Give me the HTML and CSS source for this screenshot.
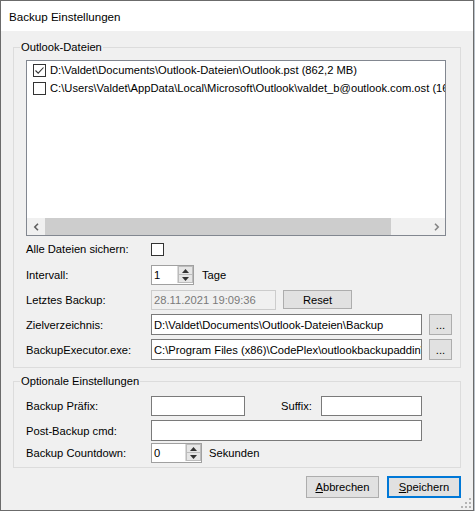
FILE: index.html
```html
<!DOCTYPE html>
<html lang="de">
<head>
<meta charset="utf-8">
<title>Backup Einstellungen</title>
<link rel="stylesheet" href="styles.css">
</head>
<body>
<div class="window">
  <div class="titlebar"><span class="title">Backup Einstellungen</span></div>
  <div class="client">
    <div class="group g1">
      <span class="legend">Outlook-Dateien</span>
      <div class="listbox">
        <div class="items">
          <div class="item"><span class="cb"><svg width="11" height="11" viewBox="0 0 11 11"><polyline points="1.5,5.5 4.2,8.2 9.5,2.5" fill="none" stroke="#333" stroke-width="1.1"/></svg></span><span>D:\Valdet\Documents\Outlook-Dateien\Outlook.pst (862,2 MB)</span></div>
          <div class="item"><span class="cb"></span><span>C:\Users\Valdet\AppData\Local\Microsoft\Outlook\valdet_b@outlook.com.ost (16</span></div>
        </div>
        <div class="hscroll">
          <span class="sb-btn"><svg width="7" height="8" viewBox="0 0 7 8"><polyline points="5,0.8 1.8,4 5,7.2" fill="none" stroke="#606060" stroke-width="1.6"/></svg></span>
          <span class="thumb"></span>
          <span class="track"></span>
          <span class="sb-btn"><svg width="7" height="8" viewBox="0 0 7 8"><polyline points="2,0.8 5.2,4 2,7.2" fill="none" stroke="#858585" stroke-width="1.6"/></svg></span>
        </div>
      </div>
      <div class="row r1"><span class="lbl">Alle Dateien sichern:</span><span class="cb"></span></div>
      <div class="row r2"><span class="lbl">Intervall:</span>
        <span class="num w43"><span class="num-val">1</span><span class="spin"><span class="spin-btn"><svg width="7" height="4" viewBox="0 0 7 4"><polygon points="0,4 7,4 3.5,0" fill="#333"/></svg></span><span class="spin-btn"><svg width="7" height="4" viewBox="0 0 7 4"><polygon points="0,0 7,0 3.5,4" fill="#333"/></svg></span></span></span>
        <span class="unit">Tage</span>
      </div>
      <div class="row r3"><span class="lbl">Letztes Backup:</span><span class="tb disabled w125">28.11.2021 19:09:36</span><span class="btn reset">Reset</span></div>
      <div class="row r4"><span class="lbl">Zielverzeichnis:</span><span class="tb w271">D:\Valdet\Documents\Outlook-Dateien\Backup</span><span class="btn dots">...</span></div>
      <div class="row r5"><span class="lbl">BackupExecutor.exe:</span><span class="tb w271">C:\Program Files (x86)\CodePlex\outlookbackupaddin\BackupExecutor.exe</span><span class="btn dots">...</span></div>
    </div>
    <div class="group g2">
      <span class="legend">Optionale Einstellungen</span>
      <div class="row s1"><span class="lbl">Backup Präfix:</span><span class="tb w94"></span><span class="lbl-suffix">Suffix:</span><span class="tb w101"></span></div>
      <div class="row s2"><span class="lbl">Post-Backup cmd:</span><span class="tb w271"></span></div>
      <div class="row s3"><span class="lbl">Backup Countdown:</span>
        <span class="num w51"><span class="num-val">0</span><span class="spin"><span class="spin-btn"><svg width="7" height="4" viewBox="0 0 7 4"><polygon points="0,4 7,4 3.5,0" fill="#333"/></svg></span><span class="spin-btn"><svg width="7" height="4" viewBox="0 0 7 4"><polygon points="0,0 7,0 3.5,4" fill="#333"/></svg></span></span></span>
        <span class="unit">Sekunden</span>
      </div>
    </div>
    <div class="buttons">
      <span class="btn dlg"><u>A</u>bbrechen</span>
      <span class="btn dlg default"><u>S</u>peichern</span>
    </div>
  </div>
  <svg class="grip" width="11" height="11" viewBox="0 0 11 11">
    <rect x="8" y="0" width="2" height="2" fill="#b4b4b4"/>
    <rect x="4" y="4" width="2" height="2" fill="#b4b4b4"/>
    <rect x="8" y="4" width="2" height="2" fill="#b4b4b4"/>
    <rect x="0" y="8" width="2" height="2" fill="#b4b4b4"/>
    <rect x="4" y="8" width="2" height="2" fill="#b4b4b4"/>
    <rect x="8" y="8" width="2" height="2" fill="#b4b4b4"/>
  </svg>
</div>
</body>
</html>
```
FILE: styles.css
```css
html, body {
  margin: 0;
  padding: 0;
}
body {
  background: #b9c1c9;
  font-family: "Liberation Sans", Arial, sans-serif;
  font-size: 11.2px;
  color: #000;
}
.window {
  position: relative;
  width: 474px;
  height: 511px;
  box-sizing: border-box;
  border: 1px solid #6b6b6b;
  background: #f0f0f0;
  display: flex;
  flex-direction: column;
}
.titlebar {
  height: 30px;
  flex: none;
  background: #fff;
  display: flex;
  align-items: center;
  padding-left: 8px;
  font-size: 11.6px;
}
.client {
  flex: 1;
  padding: 0 12px;
}
.group {
  position: relative;
  border: 1px solid #dcdcdc;
}
.g1 {
  margin-top: 16px;
  padding: 12px 14px 7px 12px;
}
.g2 {
  margin-top: 13px;
  padding: 0 14px 4px 12px;
}
.legend {
  position: absolute;
  top: -8px;
  left: 6px;
  padding: 0 1px;
  line-height: 14px;
  background: #f0f0f0;
}
.listbox {
  height: 176px;
  box-sizing: border-box;
  border: 1px solid #828790;
  background: #fff;
  display: flex;
  flex-direction: column;
  overflow: hidden;
}
.items {
  flex: 1;
  overflow: hidden;
  white-space: nowrap;
}
.item {
  height: 18px;
  display: flex;
  align-items: center;
  padding-left: 6px;
}
.cb {
  flex: none;
  width: 13px;
  height: 13px;
  box-sizing: border-box;
  border: 1px solid #333;
  background: #fff;
  margin-right: 4px;
  display: flex;
  align-items: center;
  justify-content: center;
}
.hscroll {
  height: 17px;
  flex: none;
  display: flex;
  background: #f0f0f0;
}
.sb-btn {
  flex: none;
  width: 17px;
  display: flex;
  align-items: center;
  justify-content: center;
}
.sb-btn:first-child {
  width: 18px;
}
.thumb {
  flex: none;
  width: 346px;
  background: #cdcdcd;
}
.track {
  flex: 1;
}
.row {
  display: flex;
  align-items: center;
}
.lbl {
  flex: none;
  width: 125px;
  white-space: nowrap;
}
.r1 { margin-top: 3px; height: 20px; }
.r2 { margin-top: 6px; height: 20px; }
.r3 { margin-top: 5px; height: 20px; align-items: flex-start; }
.r3 .lbl { align-self: center; }
.r4 { margin-top: 4px; height: 21px; }
.r5 { margin-top: 4px; height: 21px; }
.s1 { margin-top: 14px; height: 20px; }
.s2 { margin-top: 4px; height: 21px; }
.s3 { margin-top: 2px; height: 20px; }
.tb {
  flex: none;
  height: 100%;
  box-sizing: border-box;
  border: 1px solid #7a7a7a;
  background: #fff;
  padding-left: 2px;
  display: flex;
  align-items: center;
  white-space: nowrap;
  overflow: hidden;
}
.tb.disabled {
  border-color: #cccccc;
  background: #f0f0f0;
  color: #7a7a7a;
}
.w94 { width: 94px; }
.w101 { width: 101px; }
.w125 { width: 125px; }
.w271 { width: 271px; }
.lbl-suffix {
  flex: none;
  width: 40px;
  margin-left: 36px;
}
.btn {
  flex: none;
  box-sizing: border-box;
  border: 1px solid #adadad;
  background: #e1e1e1;
  display: flex;
  align-items: center;
  justify-content: center;
  white-space: nowrap;
}
.reset {
  width: 69px;
  height: 19px;
  margin-left: 7px;
}
.dots {
  width: 23px;
  height: 21px;
  margin-left: 7px;
}
.num {
  flex: none;
  height: 100%;
  box-sizing: border-box;
  border: 1px solid #a0a0a0;
  background: #fff;
  display: flex;
}
.w43 { width: 43px; }
.w51 { width: 51px; }
.num-val {
  flex: 1;
  padding-left: 2px;
  display: flex;
  align-items: center;
}
.spin {
  flex: none;
  width: 15px;
  margin: 0 0 1px 0;
  display: flex;
  flex-direction: column;
  border-left: 1px solid #dadada;
}
.spin-btn {
  flex: 1;
  background: #e6e6e6;
  border: 1px solid #bcbcbc;
  display: flex;
  align-items: center;
  justify-content: center;
}
.spin-btn + .spin-btn {
  border-top: none;
}
.unit {
  margin-left: 8px;
  white-space: nowrap;
}
.s3 .unit {
  margin-left: 7px;
}
.buttons {
  margin-top: 8px;
  display: flex;
  justify-content: flex-end;
  gap: 8px;
}
.dlg {
  height: 22px;
}
.dlg:first-child {
  width: 73px;
}
.dlg.default {
  width: 74px;
  border: 2px solid #0078d7;
}
.grip {
  position: absolute;
  right: 1px;
  bottom: 1px;
}
```
